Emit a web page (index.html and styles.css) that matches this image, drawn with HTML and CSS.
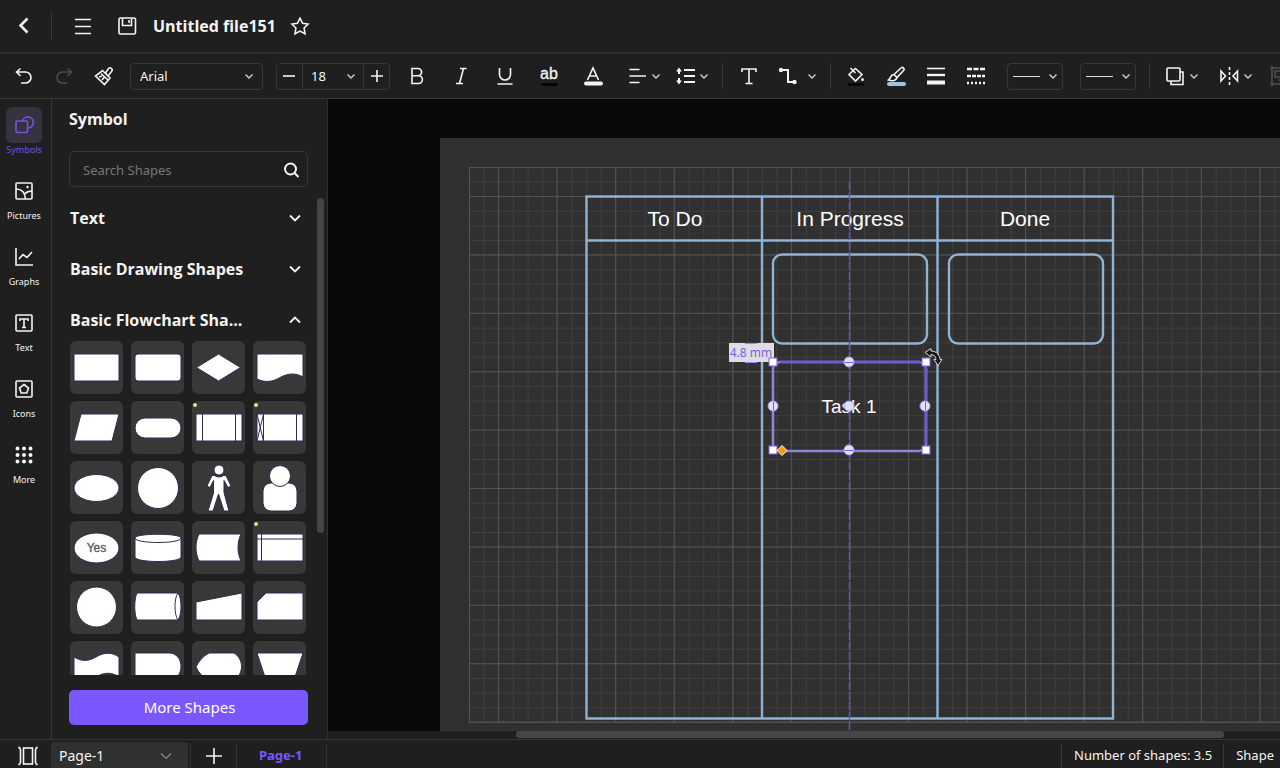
FILE: index.html
```html
<!DOCTYPE html>
<html lang="en">
<head>
<meta charset="utf-8">
<title>Untitled file151</title>
<link rel="stylesheet" href="styles.css">
</head>
<body>
<svg class="defs" aria-hidden="true">
  <symbol id="chev" viewBox="0 0 10 10"><path d="M1.500 3.500 5 7l3.500-3.500"/></symbol>
</svg>
<div class="app">
  <header class="titlebar">
    <button class="tool" aria-label="Back"><svg class="ic bold" viewBox="0 0 20 20"><path d="M13.500 2.500 6.500 9.500l7 7"/></svg></button>
    <span class="sep tall"></span>
    <button class="tool" aria-label="Menu"><svg class="ic" viewBox="0 0 20 20"><path d="M2 3.500h16M2 10.500h16M2 17.500h16"/></svg></button>
    <button class="tool save" aria-label="Save"><svg class="ic" viewBox="0 0 20 20"><rect x="2" y="2" width="16.500" height="16" rx="1.500"/><path d="M5.500 2.500v7h9v-7M12 4v3"/></svg></button>
    <h1 class="filename">Untitled file151</h1>
    <button class="tool star" aria-label="Favourite"><svg class="ic" viewBox="0 0 20 20"><path d="m10 2.200 2.500 5 5.600.800-4 4 .900 5.700-5-2.600-5 2.600.900-5.700-4-4 5.600-.800z"/></svg></button>
  </header>

  <div class="toolbar" role="toolbar" aria-label="Formatting">
    <div class="group g16">
      <button class="tool" aria-label="Undo"><svg class="ic" viewBox="0 0 20 20"><path d="M6.500 2.500 2.500 6l4 4M3 6h8.500a5.500 5.500 0 0 1 0 11H7"/></svg></button>
      <button class="tool dim" aria-label="Redo"><svg class="ic" viewBox="0 0 20 20"><path d="m13.500 2.500 4 3.500-4 4M17 6H8.500a5.500 5.500 0 0 0 0 11H13"/></svg></button>
      <button class="tool" aria-label="Format painter"><svg class="ic" viewBox="0 0 20 20"><path d="m8.500 4.500 7.500 7.500-5.500 6.500L1.500 10zM5 11l3-1M8 14l2.500-3M11.500 7l3-4.500a2 2 0 0 1 3 3L14 10z"/><path d="m7 7.500 7 6.500"/></svg></button>
    </div>
    <label class="picker font"><select aria-label="Font"><option>Arial</option></select><svg class="chev"><use href="#chev"/></svg></label>
    <div class="stepper">
      <button aria-label="Smaller"><svg class="ic" viewBox="0 0 20 20"><path d="M3 10h12"/></svg></button>
      <label class="size"><select aria-label="Font size"><option>18</option></select><svg class="chev"><use href="#chev"/></svg></label>
      <button aria-label="Larger"><svg class="ic" viewBox="0 0 20 20"><path d="M4 10h12M10 4v12"/></svg></button>
    </div>
    <div class="group g20">
      <button class="tool" aria-label="Bold"><svg class="ic" viewBox="0 0 20 20"><path d="M5 2.500h6a3.600 3.600 0 0 1 0 7.200H5zM5 9.700h6.500a3.900 3.900 0 0 1 0 7.800H5z"/></svg></button>
      <button class="tool" aria-label="Italic"><svg class="ic" viewBox="0 0 20 20"><path d="M9 2.500h6.500M5 17.500h7M12.500 2.500l-4 15"/></svg></button>
      <button class="tool" aria-label="Underline"><svg class="ic" viewBox="0 0 20 20"><path d="M4.500 2v6.500a5.500 5.500 0 0 0 11 0V2M2.500 18h15"/></svg></button>
      <button class="tool" aria-label="Highlight"><svg class="ic" viewBox="0 0 20 20"><text x="10" y="13" class="ab">ab</text><path class="blk" d="M3.500 18.500h14"/></svg></button>
      <button class="tool" aria-label="Font colour"><svg class="ic" viewBox="0 0 20 20"><path d="M4.500 14 10 2l5.500 12M6.500 10h7"/><path class="bar" d="M3 17.500h15"/></svg></button>
    </div>
    <div class="group g14 align">
      <button class="tool pair" aria-label="Align"><svg class="ic" viewBox="0 0 20 20"><path d="M2.500 3.500h10M2.500 10h16.500M2.500 16.500h10"/></svg><svg class="chev"><use href="#chev"/></svg></button>
      <button class="tool pair" aria-label="Line spacing"><svg class="ic med" viewBox="0 0 20 20"><path d="M9 4h11M9 10h11M9 16h11M4 3v5M4 12v5"/><path class="fill" d="M4 1.500 7 5.500H1zM4 18.500 7 14.500H1z"/></svg><svg class="chev"><use href="#chev"/></svg></button>
    </div>
    <span class="sep"></span>
    <div class="group g16 insert">
      <button class="tool" aria-label="Text"><svg class="ic" viewBox="0 0 20 20"><path d="M3 6V3h14v3M10 3v14.500M6.500 17.500h7"/></svg></button>
      <button class="tool pair wide" aria-label="Connector"><svg class="ic med" viewBox="0 0 20 20"><path d="M4 4h7v12h6"/><circle class="fill" cx="4" cy="4" r="2.200"/><circle class="fill" cx="17.500" cy="16" r="2.200"/></svg><svg class="chev"><use href="#chev"/></svg></button>
    </div>
    <span class="sep"></span>
    <div class="group g16 paint">
      <button class="tool" aria-label="Fill"><svg class="ic" viewBox="0 0 20 20"><path d="m9.500 2.500 6.500 6-6.500 6.500-6.500-6.500zM9.500 7 4.500 2"/><circle class="fill" cx="16.500" cy="13.500" r="1.500"/><path class="blk" d="M3 18.500h14"/></svg></button>
      <button class="tool" aria-label="Line colour"><svg class="ic" viewBox="0 0 20 20"><path d="M8 8.500 15 2a1.700 1.700 0 0 1 2.500 2.500L11 11.500zM8 8.500c-4 0-3 4-5.500 5.500 4 1.500 8 .500 8.500-2.500"/><path class="bar blue" d="M3 18h15"/></svg></button>
      <button class="tool" aria-label="Line weight"><svg class="ic" viewBox="0 0 20 20"><path d="M1 2.500h18"/><path class="w3" d="M1 9h18"/><path class="w4" d="M1 16.500h18"/></svg></button>
      <button class="tool" aria-label="Line style"><svg class="ic" viewBox="0 0 20 20"><path class="w3" stroke-dasharray="5 1.500" d="M1 3h18"/><path class="w3" stroke-dasharray="4 1" d="M1 10h18"/><path class="w3" stroke-dasharray="2 2" d="M1 17h18"/></svg></button>
    </div>
    <button class="picker arrow" aria-label="Line start"><span class="rule"></span><svg class="chev"><use href="#chev"/></svg></button>
    <button class="picker arrow" aria-label="Line end"><span class="rule"></span><svg class="chev"><use href="#chev"/></svg></button>
    <span class="sep"></span>
    <div class="group g14 arrange">
      <button class="tool pair" aria-label="Layer"><svg class="ic" viewBox="0 0 20 20"><rect x="2" y="2" width="13" height="13" rx="1"/><path d="M15 6h3v12.500H6V15"/></svg><svg class="chev"><use href="#chev"/></svg></button>
      <button class="tool pair flip" aria-label="Flip"><svg class="ic" viewBox="0 0 20 20"><path d="M2 5v10l4.500-5zM18.500 5v10L14 10z"/><path stroke-dasharray="3 2" d="M10.500 1v18"/></svg><svg class="chev"><use href="#chev"/></svg></button>
      <button class="tool dim" aria-label="Group"><svg class="ic" viewBox="0 0 20 20"><rect x="3" y="2" width="16" height="16"/><rect x="6" y="5" width="6" height="6"/><path d="M1 2h4M3 0v4M1 18h4M3 16v4M14 9v5H9"/></svg></button>
    </div>
  </div>

  <div class="body">
    <nav class="rail">
      <a class="item on" href="#symbols"><span class="box"><svg class="ic" viewBox="0 0 20 20"><rect x="2" y="6" width="11.500" height="11.500" rx="1"/><path d="M8.500 6A5.500 5.500 0 1 1 14 13"/></svg></span>Symbols</a>
      <a class="item" href="#pictures"><span class="box"><svg class="ic" viewBox="0 0 20 20"><rect x="2" y="2" width="16" height="16" rx="1"/><path d="M2 8c6 0 9 4 9.500 10M10.500 13c2-2 4.500-3 7.500-3"/><circle class="fill" cx="13.500" cy="6" r="1.200"/></svg></span>Pictures</a>
      <a class="item" href="#graphs"><span class="box"><svg class="ic" viewBox="0 0 20 20"><path d="M2 1v17h17M5 12l4-4.500 4 3L18 5"/></svg></span>Graphs</a>
      <a class="item" href="#text"><span class="box"><svg class="ic" viewBox="0 0 20 20"><rect x="2" y="2" width="16" height="16" rx="1"/><path d="M6 8V6h8v2M10 6v8.500M8 14.500h4"/></svg></span>Text</a>
      <a class="item" href="#icons"><span class="box"><svg class="ic" viewBox="0 0 20 20"><rect x="2" y="2" width="16" height="16" rx="1"/><path d="m10 5.500 4.500 3.500-1.700 5H7.200L5.500 9z"/></svg></span>Icons</a>
      <a class="item" href="#more"><span class="box"><svg class="ic dots" viewBox="0 0 20 20"><path d="M3.500 3.500h0M10 3.500h0M16.500 3.500h0M3.500 10h0M10 10h0M16.500 10h0M3.500 16.500h0M10 16.500h0M16.500 16.500h0"/></svg></span>More</a>
    </nav>

    <aside class="panel">
      <h2 class="heading">Symbol</h2>
      <div class="search"><input type="search" placeholder="Search Shapes" aria-label="Search Shapes"><button aria-label="Search"><svg class="ic med" viewBox="0 0 20 20"><circle cx="8.500" cy="9" r="5.500"/><path d="m12.500 13 4 4"/></svg></button></div>
      <div class="library">
        <div class="scroll">
          <button class="section">Text<svg class="fold" viewBox="0 0 12 12"><path d="m1 3.500 5 5 5-5"/></svg></button>
          <button class="section">Basic Drawing Shapes<svg class="fold" viewBox="0 0 12 12"><path d="m1 3.500 5 5 5-5"/></svg></button>
          <button class="section">Basic Flowchart Sha...<svg class="fold" viewBox="0 0 12 12"><path d="m1 8.500 5-5 5 5"/></svg></button>
          <div class="tiles">
            <button class="tile" aria-label="Process"><svg viewBox="0 0 53 53"><path d="M4 13h45v27H4z"/></svg></button>
            <button class="tile" aria-label="Rounded process"><svg viewBox="0 0 53 53"><rect x="4" y="13" width="46" height="27" rx="3"/></svg></button>
            <button class="tile" aria-label="Decision"><svg viewBox="0 0 53 53"><path d="m26.500 13 22 13.500-22 13.500-22-13.500z"/></svg></button>
            <button class="tile" aria-label="Document"><svg viewBox="0 0 53 53"><path d="M4 13h46v23c-7-4-14-4-22 0-8 5-16 6-24 2z"/></svg></button>

            <button class="tile" aria-label="Data"><svg viewBox="0 0 53 53"><path d="M11 13h38l-7 27H4z"/></svg></button>
            <button class="tile" aria-label="Terminator"><svg viewBox="0 0 53 53"><rect x="4" y="17" width="46" height="20" rx="10"/></svg></button>
            <button class="tile" aria-label="Predefined process"><svg viewBox="0 0 53 53"><path d="M4 13h46v27H4z"/><path d="M10.500 13v27M43.500 13v27"/><circle class="new" cx="3" cy="4" r="2"/></svg></button>
            <button class="tile" aria-label="Macro"><svg viewBox="0 0 53 53"><path d="M4 13h46v27H4z"/><path class="open" d="M10.500 13v27M43.500 13v27M4 13l6.500 27M10.500 13 4 40"/><circle class="new" cx="3" cy="4" r="2"/></svg></button>

            <button class="tile" aria-label="Ellipse"><svg viewBox="0 0 53 53"><ellipse cx="26.500" cy="27" rx="22.500" ry="13.500"/></svg></button>
            <button class="tile" aria-label="Connector"><svg viewBox="0 0 53 53"><circle cx="27" cy="27" r="20.500"/></svg></button>
            <button class="tile" aria-label="Person"><svg viewBox="0 0 53 53"><path d="M20 14.500 34 14.500 39 25l-3 1.500-4-7v12L37 50h-5l-5.500-17L21 50h-5l5.500-18V19.500l-3.500 7-3-1.500z"/><circle class="halo" cx="27" cy="9" r="7.500"/><circle cx="27" cy="9" r="5"/></svg></button>
            <button class="tile" aria-label="User"><svg viewBox="0 0 53 53"><rect x="10" y="22" width="34" height="28" rx="8"/><circle cx="27" cy="15" r="10.500"/></svg></button>

            <button class="tile" aria-label="Yes"><svg viewBox="0 0 53 53"><ellipse cx="26.500" cy="27" rx="22.500" ry="15"/><text x="26.500" y="31">Yes</text></svg></button>
            <button class="tile" aria-label="Database"><svg viewBox="0 0 53 53"><path d="M4 17c0-5 46-5 46 0v19c0 6-46 6-46 0z"/><path class="open" d="M4 17c0 6 46 6 46 0"/></svg></button>
            <button class="tile" aria-label="Stored data"><svg viewBox="0 0 53 53"><path d="M7 13h42c-4 8-4 19 0 27H7c-4-8-4-19 0-27z"/></svg></button>
            <button class="tile" aria-label="Internal storage"><svg viewBox="0 0 53 53"><path d="M4 13h46v27H4z"/><path d="M8.500 13v27M4 18h46"/><circle class="new" cx="3" cy="3" r="2"/></svg></button>

            <button class="tile" aria-label="Junction"><svg viewBox="0 0 53 53"><circle cx="26.500" cy="26" r="20"/></svg></button>
            <button class="tile" aria-label="Direct access"><svg viewBox="0 0 53 53"><path d="M6 12h41c4 5 4 22 0 27H6c-3-6-3-21 0-27z"/><path class="open" d="M47 12c-4 5-4 22 0 27"/></svg></button>
            <button class="tile" aria-label="Manual input"><svg viewBox="0 0 53 53"><path d="m4 21 46-9v27H4z"/></svg></button>
            <button class="tile" aria-label="Card"><svg viewBox="0 0 53 53"><path d="M13 12h37v27H4V21z"/></svg></button>

            <button class="tile" aria-label="Tape"><svg viewBox="0 0 53 53"><path d="M4 16c8 5 15 4 22 0 8-5 16-5 23 0v20c-7-5-15-5-23 0-7 4-14 5-22 0z"/></svg></button>
            <button class="tile" aria-label="Delay"><svg viewBox="0 0 53 53"><path d="M4 12h34c16 0 16 27 0 27H4z"/></svg></button>
            <button class="tile" aria-label="Display"><svg viewBox="0 0 53 53"><path d="M17 12h25c10 6 10 21 0 27H17Q8 35 4 26 8 17 17 12z"/></svg></button>
            <button class="tile" aria-label="Manual operation"><svg viewBox="0 0 53 53"><path d="M4 12h46l-9 27H13z"/></svg></button>
          </div>
        </div>
        <span class="thumb"></span>
      </div>
      <button class="more">More Shapes</button>
    </aside>

    <main class="stage">
      <svg class="canvas" role="img" aria-label="Kanban board">
        <defs>
          <pattern id="grid" x="141" y="68" width="14.640" height="14.600" patternUnits="userSpaceOnUse"><path class="minor" d="M.5 0v14.600M0 .5h14.640"/></pattern>
          <pattern id="gridMajor" x="170" y="97" width="58.560" height="58.400" patternUnits="userSpaceOnUse"><path class="major" d="M.5 0v58.400M0 .5h58.560"/></pattern>
        </defs>
        <rect class="sheet" x="112" y="39" width="100%" height="100%"/>
        <rect x="141" y="68" width="100%" height="555" fill="url(#grid)"/>
        <rect x="141" y="68" width="100%" height="555" fill="url(#gridMajor)"/>
        <path class="major" d="M141.500 68v555M141 68.500h2000M141 623.500h2000"/>
        <g class="board">
          <path d="M258.500 97.500h526.500v522H258.500zM434 97.500v522M609.500 97.500v522M258.500 141.500h526.500"/>
          <rect x="445" y="155.500" width="154" height="89" rx="9"/>
          <rect x="621" y="155.500" width="154" height="89" rx="9"/>
        </g>
        <g class="label">
          <text x="347" y="127">To Do</text>
          <text x="522" y="127">In Progress</text>
          <text x="697" y="127">Done</text>
          <text class="task" x="521" y="314">Task 1</text>
        </g>
        <path class="guide" d="M521.500 83v549"/>
        <rect class="picked" x="445" y="263" width="153" height="89" rx="7"/>
        <path class="picked edge" d="M452 263h139q7 0 7 7v75"/>
        <rect class="tip" x="401" y="244" width="45" height="19"/>
        <path class="caliper" d="M417 244.500h12M417 263.500h12"/>
        <text class="measure" x="423" y="258">4.8 mm</text>
        <g class="round"><circle cx="521" cy="263" r="5"/><circle cx="445" cy="307" r="5"/><circle cx="521" cy="307" r="5"/><circle cx="597" cy="307" r="5"/><circle cx="521" cy="351" r="5"/></g>
        <path class="cross" d="M517 263.500h8M517 351.500h8M445.500 303v8M597.500 303v8"/>
        <g class="square"><rect x="441" y="259" width="8" height="8"/><rect x="594" y="259" width="8" height="8"/><rect x="441" y="347" width="8" height="8"/><rect x="594" y="347" width="8" height="8"/></g>
        <path class="diamond" d="m454 346.500 5 5-5 5-5-5z"/>
        <path class="rotate" d="M597 253.500l6-4v2.500c6 0 9 5 9 8.500h2l-4 6-4-6h2c0-3-2-5-5-5v2.500z"/>
      </svg>
      <div class="hscroll"><span></span></div>
    </main>
  </div>

  <footer class="status">
    <button class="tool view" aria-label="Page view"><svg class="ic" viewBox="0 0 20 20"><rect x="5.500" y="2" width="9" height="16"/><path d="M.5 1c1.500 1 2 1.500 2 3v12c0 1.500-.5 2-2 3M19.500 1c-1.500 1-2 1.500-2 3v12c0 1.500.5 2 2 3"/></svg></button>
    <label class="page"><select aria-label="Page"><option>Page-1</option></select><svg class="fold" viewBox="0 0 12 12"><path d="m1 3.500 5 5 5-5"/></svg></label>
    <button class="add" aria-label="Add page"><svg class="ic" viewBox="0 0 20 20"><path d="M2 10h16M10 2v16"/></svg></button>
    <a class="tab" href="#page-1">Page-1</a>
    <span class="info">Number of shapes: 3.5</span>
    <span class="info last">Shape</span>
  </footer>
</div>
</body>
</html>
```
FILE: styles.css
```css
* { box-sizing: border-box; }
body {
  margin: 0;
  background: #090909;
  color: #f4f4f4;
  font-family: "Noto Sans", "Open Sans", sans-serif;
  font-size: 13px;
}
button, select, input { font: inherit; color: inherit; background: none; border: 0; padding: 0; margin: 0; }
select { appearance: none; }
a { color: inherit; text-decoration: none; }
.defs { display: none; }
.app { display: flex; flex-direction: column; height: 100vh; overflow: hidden; background: #1f1f1f; }

.ic { width: 20px; height: 20px; flex: none; fill: none; stroke: currentColor; stroke-width: 1.6; }
.ic .fill { fill: currentColor; stroke: none; }
.ic.bold { stroke-width: 2.6; }
.ic.med { stroke-width: 2; }
.ic .w3 { stroke-width: 2.4; }
.ic .w4 { stroke-width: 4; }
.ic .bar { stroke-width: 4; stroke-linecap: round; }
.ic .blue { stroke: #9fc3e2; }
.ic .blk { stroke: #000; stroke-width: 2.4; stroke-linecap: round; }
.ic .ab { fill: currentColor; stroke: currentColor; stroke-width: .3; font-family: "Liberation Sans", sans-serif; font-size: 16px; text-anchor: middle; }
.ic.dots { stroke-width: 4; stroke-linecap: round; }
.chev { width: 10px; height: 10px; flex: none; fill: none; stroke: #cfcfcf; stroke-width: 1.4; }
.fold { width: 12px; height: 12px; flex: none; fill: none; stroke: currentColor; stroke-width: 1.8; }

.tool { display: flex; align-items: center; justify-content: center; width: 24px; height: 28px; flex: none; }
.pair { width: 34px; justify-content: space-between; }
.wide { width: 40px; }
.dim { color: #4c4c4c; }
.sep { width: 1px; height: 26px; flex: none; background: #383838; }
.tall { height: 28px; margin: 0 19px 0 15px; }

.titlebar { display: flex; align-items: center; height: 54px; flex: none; padding: 0 12px; border-bottom: 2px solid #2d2d2d; }
.save { margin-left: 20px; }
.filename { margin: 0 0 0 14px; font-size: 16px; line-height: 22px; font-weight: 700; font-family: "Open Sans", sans-serif; }
.star { margin-left: 12px; }

.toolbar { display: flex; align-items: center; height: 45px; flex: none; padding: 0 0 0 12px; border-bottom: 1px solid #373737; overflow: hidden; }
.group { display: flex; flex: none; }
.g14 { gap: 14px; }
.g16 { gap: 16px; }
.g20 { gap: 20px; }
.picker { display: flex; align-items: center; height: 27px; flex: none; border: 1px solid #373737; border-radius: 4px; padding: 0 8px 0 9px; }
.font { width: 133px; margin: 0 13px 0 14px; }
.font select { flex: 1; }
.stepper { display: flex; flex: none; width: 114px; height: 27px; margin-right: 15px; border: 1px solid #373737; border-radius: 4px; }
.stepper button { display: flex; align-items: center; justify-content: center; width: 25px; }
.size { display: flex; align-items: center; flex: 1; padding: 0 7px 0 8px; border: solid #373737; border-width: 0 1px; }
.size select { flex: 1; min-width: 0; }
.align { margin: 0 13px 0 22px; }
.insert { margin: 0 13px 0 14px; }
.paint { margin: 0 19px 0 13px; }
.arrow { width: 56px; justify-content: space-between; margin-right: 17px; padding: 0 4px 0 5px; }
.arrow + .sep { margin-left: -4px; }
.rule { width: 27px; height: 1px; background: #dcdcdc; }
.arrange { margin-left: 15px; }
.flip { margin-left: 6px; }

.body { display: flex; flex: 1; min-height: 0; }
.rail { display: flex; flex-direction: column; gap: 16px; width: 52px; flex: none; padding: 8px 3px 0 0; border-right: 1px solid #373737; }
.item { display: flex; flex-direction: column; align-items: center; font-size: 9px; line-height: 14px; }
.box { display: flex; align-items: center; justify-content: center; width: 36px; height: 36px; border-radius: 6px; }
.on { color: #7455e0; }
.on .box { background: #37323f; }

.panel { display: flex; flex-direction: column; width: 276px; flex: none; padding: 9px 3px 14px 17px; border-right: 1px solid #303030; }
.heading { margin: 0; font-size: 16px; line-height: 22px; font-family: "Open Sans", sans-serif; }
.search { display: flex; align-items: center; height: 36px; flex: none; margin: 21px 16px 4px 0; padding: 1px 5px 0 13px; border: 1px solid #373737; border-radius: 5px; }
.search input { flex: 1; min-width: 0; outline: 0; }
.search input::placeholder { color: #767676; opacity: 1; }
.search button { display: flex; }
.library { display: flex; flex: 1; min-height: 0; gap: 10px; padding-top: 1px; }
.scroll { flex: 1; min-width: 0; overflow: hidden; }
.section { display: flex; align-items: center; justify-content: space-between; width: 100%; height: 51px; padding: 0 6px 0 1px; font-family: "Open Sans", sans-serif; font-size: 16px; font-weight: 700; }
.thumb { width: 7px; height: 335px; flex: none; margin-top: 6px; border-radius: 4px; background: #454545; }
.tiles { display: grid; grid-template-columns: repeat(4, 1fr); gap: 7px 8px; padding: 0 1px; margin-top: -4px; }
.tile { display: flex; height: 53px; border-radius: 6px; background: #383838; }
.tile svg { width: 100%; height: 53px; fill: #fff; stroke: #2c2c55; stroke-width: 1; }
.tile .open { fill: none; }
.tile .new { fill: #f0dc78; stroke: none; }
.tile .halo { fill: #383838; stroke: none; }
.tile text { fill: #555; stroke: #555; stroke-width: .3; font-family: "Liberation Sans", sans-serif; font-size: 12px; text-anchor: middle; }
.more { height: 35px; flex: none; margin: 15px 16px 0 0; padding: 0 0 2px 2px; border-radius: 5px; background: #7a57ff; color: #fff; font-size: 15px; }

.stage { display: flex; flex-direction: column; flex: 1; min-width: 0; background: #1f1f1f; }
.canvas { width: 100%; flex: 1; min-height: 0; background: #090909; }
.sheet { fill: #303030; }
.minor { stroke: #3f3f3f; fill: none; }
.major { stroke: #525252; fill: none; }
.board { fill: none; stroke: #8fb3d0; stroke-width: 2.4; }
.label { fill: #fff; font-family: "Liberation Sans", sans-serif; font-size: 21px; text-anchor: middle; }
.label .task { font-size: 19px; }
.guide { stroke: #6a4fd0; stroke-width: 1.4; stroke-dasharray: 8 2; }
.picked { fill: none; stroke: #9183dc; stroke-width: 2.6; }
.edge { stroke: #7455dc; }
.tip { fill: #dedee0; }
.caliper { stroke: #9a86e8; }
.measure { fill: #7a60dc; font-size: 12px; text-anchor: middle; }
.round { fill: #dfe0ff; stroke: #a79cec; }
.cross { stroke: #7a60dc; }
.square { fill: #fff; stroke: #7a60dc; }
.diamond { fill: #f39a12; stroke: #fff; }
.rotate { fill: #151515; stroke: #d8d8d8; }
.hscroll { height: 8px; flex: none; padding: 0 56px 0 188px; }
.hscroll span { display: block; height: 7px; border-radius: 3px; background: #454545; }

.status { display: flex; align-items: stretch; height: 29px; flex: none; border-top: 1px solid #373737; font-size: 14px; line-height: 20px; }
.view { width: 51px; height: auto; padding: 3px 0 0 5px; }
.page { display: flex; align-items: center; width: 137px; margin-top: 2px; padding: 1px 16px 0 8px; border-radius: 4px 4px 0 0; background: #303030; }
.page select { flex: 1; }
.page .fold { stroke: #8a8a8a; stroke-width: 1.2; }
.add { display: flex; align-items: center; justify-content: center; width: 47px; margin: 4px 0 0 2px; border: solid #333; border-width: 0 1px; }
.tab { width: 90px; margin-top: 4px; padding: 1px 0 0 22px; border-right: 1px solid #333; color: #7a57ff; font-size: 13px; font-weight: 700; }
.info { margin-top: 4px; padding: 1px 11px 0 12px; border-left: 1px solid #3a3a3a; white-space: nowrap; font-size: 13px; }
.tab + .info { margin-left: auto; }
.last { padding-right: 6px; }
```
